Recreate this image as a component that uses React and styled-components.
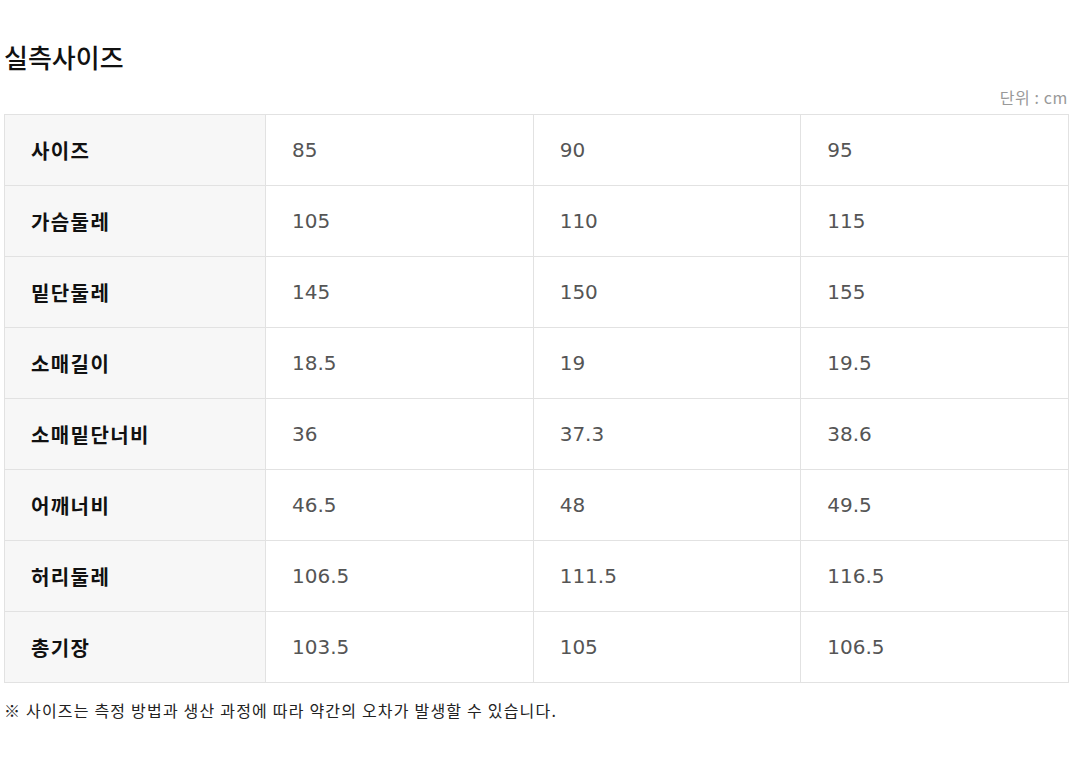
import React from 'react';
import styled, { createGlobalStyle } from 'styled-components';

const GlobalStyle = createGlobalStyle`
  body {
    margin: 0;
    background: #fff;
    font-family: "Noto Sans CJK KR", "Noto Sans", sans-serif;
  }
`;

const Page = styled.div`
  padding: 40px 4px 0 4px;
`;

const Title = styled.h2`
  margin: 0;
  font-size: 26px;
  font-weight: 500;
  color: #111;
  line-height: 34px;
`;

const Unit = styled.div`
  text-align: right;
  font-size: 16px;
  letter-spacing: 0.6px;
  color: #999;
  line-height: 20px;
  margin-top: 13px;
  margin-bottom: 7px;
`;

const Table = styled.table`
  width: 1065px;
  border-collapse: collapse;
  table-layout: fixed;
`;

const Head = styled.th`
  width: 234px;
  height: 70px;
  padding: 0 0 0 26px;
  text-align: left;
  background: #f7f7f7;
  border: 1px solid #e2e2e2;
  font-size: 20px;
  letter-spacing: 1.4px;
  font-weight: 700;
  color: #111;
`;

const Cell = styled.td`
  height: 70px;
  padding: 0 0 0 26px;
  border: 1px solid #e2e2e2;
  font-size: 20px;
  color: #555;
  font-family: "DejaVu Sans", "Noto Sans CJK KR", sans-serif;
`;

const Note = styled.p`
  margin: 15px 0 0;
  font-size: 16px;
  letter-spacing: 1.2px;
  color: #222;
`;

const rows = [
  ['사이즈', '85', '90', '95'],
  ['가슴둘레', '105', '110', '115'],
  ['밑단둘레', '145', '150', '155'],
  ['소매길이', '18.5', '19', '19.5'],
  ['소매밑단너비', '36', '37.3', '38.6'],
  ['어깨너비', '46.5', '48', '49.5'],
  ['허리둘레', '106.5', '111.5', '116.5'],
  ['총기장', '103.5', '105', '106.5'],
];

export default function App() {
  return (
    <Page>
      <GlobalStyle />
      <Title>실측사이즈</Title>
      <Unit>단위 : cm</Unit>
      <Table>
        <tbody>
          {rows.map(([label, ...vals]) => (
            <tr key={label}>
              <Head>{label}</Head>
              {vals.map((v, i) => (
                <Cell key={i}>{v}</Cell>
              ))}
            </tr>
          ))}
        </tbody>
      </Table>
      <Note>※ 사이즈는 측정 방법과 생산 과정에 따라 약간의 오차가 발생할 수 있습니다.</Note>
    </Page>
  );
}
